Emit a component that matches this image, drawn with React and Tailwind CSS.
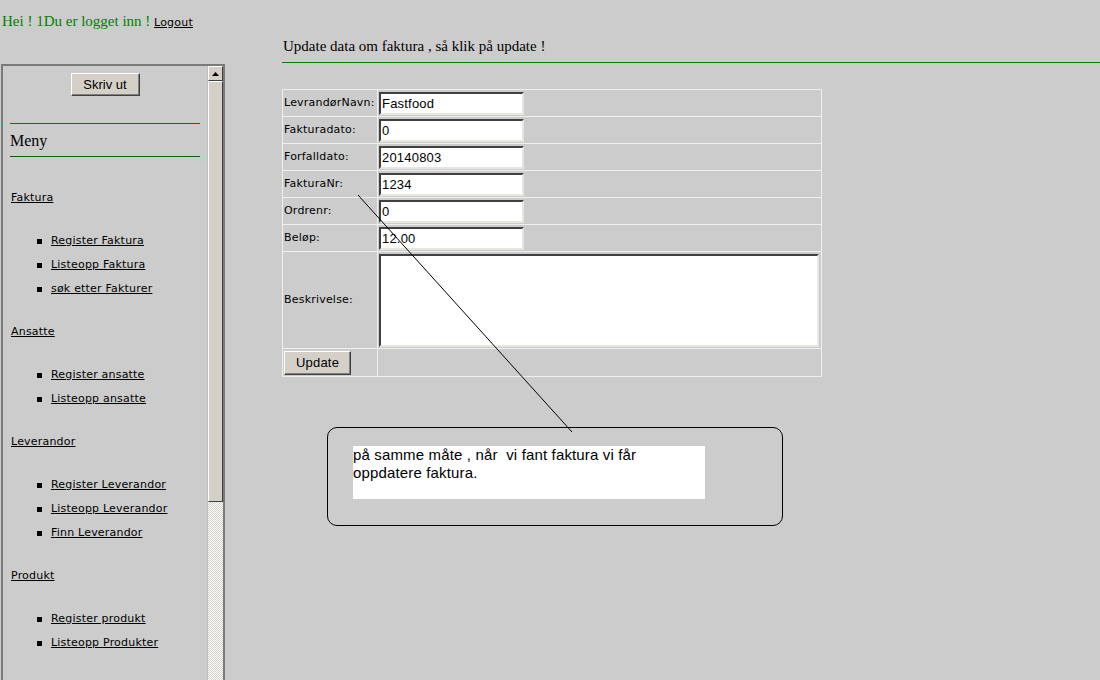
import React from "react";

const menu = [
  { title: "Faktura", items: ["Register Faktura", "Listeopp Faktura", "søk etter Fakturer"] },
  { title: "Ansatte", items: ["Register ansatte", "Listeopp ansatte"] },
  { title: "Leverandor", items: ["Register Leverandor", "Listeopp Leverandor", "Finn Leverandor"] },
  { title: "Produkt", items: ["Register produkt", "Listeopp Produkter"] },
];

const fields = [
  ["LevrandørNavn:", "Fastfood"],
  ["Fakturadato:", "0"],
  ["Forfalldato:", "20140803"],
  ["FakturaNr:", "1234"],
  ["Ordrenr:", "0"],
  ["Beløp:", "12.00"],
];

const verdana = "font-['DejaVu_Sans',Verdana,sans-serif] tracking-[0.2px]";
const serif = "font-['Liberation_Serif','Times_New_Roman',serif]";
const arial = "font-['Liberation_Sans',Arial,sans-serif]";

function WinButton({ children, className }) {
  return (
    <button
      className={`bg-[#d4d0c8] border border-t-white border-l-white border-r-[#404040] border-b-[#404040] shadow-[inset_-1px_-1px_0_#808080] text-black text-[13px] ${arial} ${className}`}
    >
      {children}
    </button>
  );
}

function Sidebar() {
  return (
    <div className="ml-[1px] mt-[32px] w-[224px] h-[624px] border-2 border-[#7a7a7a] flex">
      <div className="flex-1 overflow-hidden">
        <div className="flex justify-center pt-[7px]">
          <WinButton className="w-[69px] h-[23px]">Skriv ut</WinButton>
        </div>

        <div className="mx-[7px] mt-[27px] h-px bg-[#007a00]" />
        <div className={`ml-[7px] mt-[8px] text-[16px] leading-[18px] text-black ${serif}`}>
          Meny
        </div>
        <div className="mx-[7px] mt-[6px] h-px bg-[#006800]" />

        <div className={`pt-[34px] text-[11px] text-black ${verdana}`}>
          {menu.map((sec, i) => (
            <div key={sec.title} className={i > 0 ? "mt-6" : ""}>
              <div className="pl-[8px] leading-[14px]">
                <span className="underline">{sec.title}</span>
              </div>
              <ul className="mt-6">
                {sec.items.map((item) => (
                  <li key={item} className="h-6 flex items-center pl-[34px]">
                    <span className="w-[5px] h-[5px] bg-black mr-[9px]" />
                    <span className="underline">{item}</span>
                  </li>
                ))}
              </ul>
            </div>
          ))}
        </div>
      </div>

      {/* scrollbar */}
      <div className="w-[16px] flex flex-col border-l border-[#c0c0c0]">
        <div className="h-[15px] bg-[#d4d0c8] border border-t-white border-l-white border-r-[#404040] border-b-[#404040] flex items-center justify-center">
          <svg width="7" height="4" viewBox="0 0 7 4">
            <path d="M3.5 0 L7 4 L0 4 Z" fill="#000" />
          </svg>
        </div>
        <div className="h-[421px] bg-[#d4d0c8] border border-t-white border-l-white border-r-[#404040] border-b-[#404040]" />
        <div className="flex-1 bg-[repeating-conic-gradient(#ffffff_0_25%,#d4d0c8_0_50%)] bg-[length:2px_2px]" />
      </div>
    </div>
  );
}

const inset = "border-2 border-t-[#404040] border-l-[#404040] border-r-[#e8e6e0] border-b-[#e8e6e0] bg-white";

function FormTable() {
  return (
    <table className={`mt-[26px] border-collapse border border-[#efefef] text-[11px] text-black ${verdana}`}>
      <tbody>
        {fields.map(([label, value]) => (
          <tr key={label} className="h-[27px]">
            <td className="border border-[#efefef] w-[95px] px-[1px] whitespace-nowrap">{label}</td>
            <td className="border border-[#efefef] w-[444px] px-[1px]">
              <div className={`w-[145px] h-[23px] ${inset} text-[13px] ${arial} leading-[19px] pl-[1px]`}>
                {value}
              </div>
            </td>
          </tr>
        ))}
        <tr className="h-[97px]">
          <td className="border border-[#efefef] px-[1px]">Beskrivelse:</td>
          <td className="border border-[#efefef] px-[1px]">
            <div className={`w-[440px] h-[93px] ${inset}`} />
          </td>
        </tr>
        <tr className="h-[28px]">
          <td className="border border-[#efefef] px-[1px]">
            <WinButton className="w-[67px] h-[24px]">Update</WinButton>
          </td>
          <td className="border border-[#efefef]" />
        </tr>
      </tbody>
    </table>
  );
}

export default function App() {
  return (
    <div className="relative w-[1100px] h-[680px] overflow-hidden bg-[#cccccc]">
      <div className="pt-[10px] pl-[2px] h-[32px] leading-[20px] whitespace-nowrap">
        <span className={`text-[15px] text-[#008000] ${serif}`}>Hei ! 1Du er logget inn ! </span>
        <span className={`text-[11px] text-black underline ${verdana}`}>Logout</span>
      </div>

      <div className="flex items-start">
        <Sidebar />

        <div className="ml-[57px] flex-1 pt-[5px]">
          <div className={`text-[15px] leading-[18px] text-black pl-[1px] ${serif}`}>
            Update data om faktura , så klik på update !
          </div>
          <div className="mt-[7px] h-px bg-[#008000]" />

          <FormTable />

          <div className="ml-[45px] mt-[50px] w-[456px] h-[99px] border-[1.5px] border-black rounded-[10px] pl-[25px] pt-[18px]">
            <div className={`w-[352px] h-[53px] bg-white text-[15px] tracking-[0.15px] leading-[18px] text-black ${arial}`}>
              på samme måte , når&nbsp; vi fant faktura vi får
              <br />
              oppdatere faktura.
            </div>
          </div>
        </div>
      </div>

      <svg className="absolute inset-0 pointer-events-none" width="1100" height="680">
        <line x1="358" y1="195" x2="572" y2="432" stroke="#000" strokeWidth="1" />
      </svg>
    </div>
  );
}
